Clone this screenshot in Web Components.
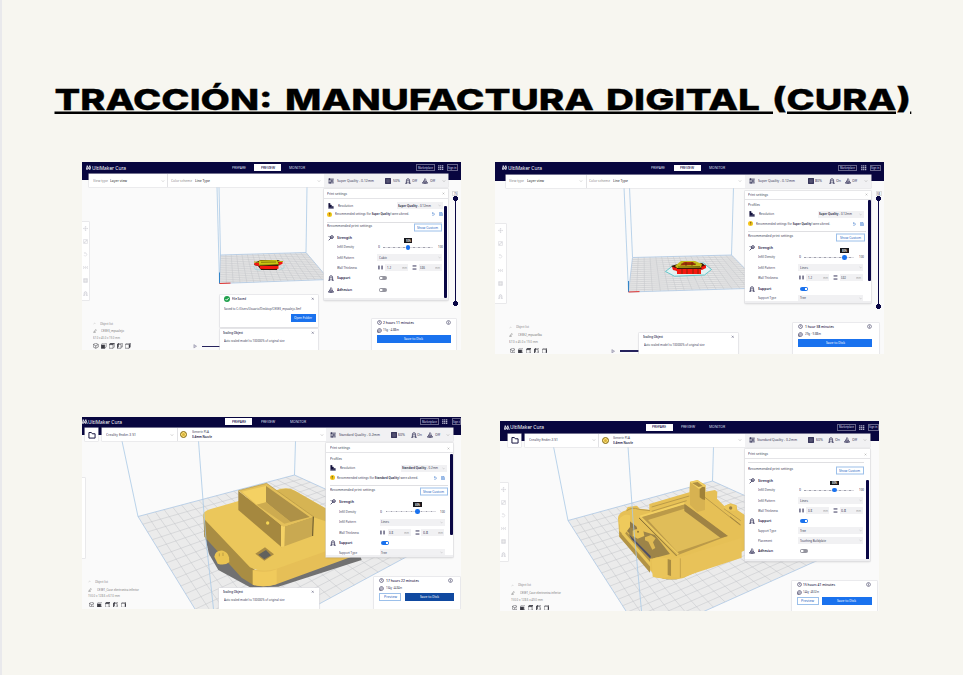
<!DOCTYPE html>
<html lang="es">
<head>
<meta charset="utf-8">
<title>Tracción: Manufactura digital (Cura)</title>
<style>
html,body{margin:0;background:#f7f6f0;width:963px;height:675px;overflow:hidden;font-family:"Noto Sans",sans-serif}
</style>
</head>
<body>
<slide-page>
  <slide-title slot="title"></slide-title>
  <cura-shot data-shot="0"></cura-shot>
  <cura-shot data-shot="1"></cura-shot>
  <cura-shot data-shot="2"></cura-shot>
  <cura-shot data-shot="3"></cura-shot>
</slide-page>
<script>
/* One line of text squeezed or stretched to a given width */
customElements.define('fit-text', class extends HTMLElement {
  connectedCallback() {
    if (this.shadowRoot) return;
    const w = +this.getAttribute('w');
    const r = this.attachShadow({mode: 'open'});
    r.innerHTML = `<style>:host{display:block;flex:none;width:${w}px;height:6px;line-height:6px;font-size:${this.getAttribute('s') || 3.8}px;color:${this.getAttribute('c') || '#3a3a55'};font-weight:${this.getAttribute('b') || 400};white-space:nowrap}
      span{display:inline-block;transform-origin:0 50%}</style><span><slot></slot></span>`;
    const s = r.querySelector('span');
    const n = s.getBoundingClientRect().width;
    if (n) s.style.transform = `scaleX(${w / n})`;
  }
});

/* Small icons on a 12-unit grid */
const ICONS = {
  sliders: '<path d="M0 2h12M0 6h12M0 10h12M3 0v4M8 4v4M4 8v4" stroke-width="1.6"/>',
  infill: '<path d="M0 0h12v12H0z" fill="currentColor"/><path d="M3 3l1.500 1.500M9 3L7.500 4.500M3 9l1.500-1.500M9 9L7.500 7.500M6 1.500v2M6 8.500v2M1.500 6h2M8.500 6h2M5 6h2" stroke="#fff" stroke-width="1.2"/>',
  support: '<path d="M2.500 10V5.500a3.500 4.500 0 0 1 7 0V10M0 11h4V8.500M12 11H8V8.500" stroke-width="1.5"/><path d="M4.700 7a1.500 1.700 0 1 1 2.600 0"/>',
  adhesion: '<path d="M6 0v5M4 3l2 2 2-2M3 5v3h6V5M0 10c3-2 9-2 12 0-3 2-9 2-12 0z" stroke-width="1.4"/>',
  res: '<path d="M1 0h3v4h3v3h4v3H1z" fill="currentColor"/><path d="M0 11.500h12"/>',
  strength: '<circle cx="8" cy="4" r="3" stroke-width="1.7"/><path d="M6 6l-5 5M1 2l3 3M6 3l3 3" stroke-width="1.5"/>',
  clock: '<circle cx="6" cy="6" r="5" stroke-width="1.4"/><path d="M6 3v3l2 1" stroke-width="1.2"/>',
  spool: '<circle cx="6" cy="6" r="5" stroke-width="1.4"/><circle cx="6" cy="6" r="2"/><path d="M1 6v5h4"/>',
  info: '<circle cx="6" cy="6" r="5" stroke-width="1.2"/><path d="M6 5v4M6 2.5v1.3" stroke-width="1.3"/>',
  chev: '<path d="M2 4l4 4 4-4" stroke-width="1.3"/>',
  up: '<path d="M2 8l4-4 4 4" stroke-width="1.2"/>',
  close: '<path d="M2 2l8 8M10 2l-8 8" stroke-width="1.3"/>',
  pencil: '<path d="M2 10l1-3 6-6 2 2-6 6zM1 11.5h8" stroke-width="1.2"/>',
  folder: '<path d="M1 2h4l1.5 2H11v7H1z" stroke-width="1.6"/>',
  undo: '<path d="M3 3h4a3 3 0 0 1 0 7H3M5 1L3 3l2 2" stroke-width="1.5"/>',
  save: '<path d="M1 1h8l2 2v8H1zM3 1v4h5V1M3 11V7h6v4" stroke-width="1.3"/>',
  wallv: '<path d="M2 1v10M10 1v10" stroke-width="2.6"/>',
  wallh: '<path d="M1 2h10M1 10h10" stroke-width="2.2"/>',
  grid: '<path d="M0 1.500h12M0 6h12M0 10.500h12" stroke-width="3" stroke-dasharray="3 1.5"/>',
  play: '<path d="M2 1l8 5-8 5z" stroke-width="1.2" fill="#c9c8d8"/>',
  cube: '<path d="M6 0l6 3v6l-6 3-6-3V3zM0 3l6 3 6-3M6 6v6" stroke-width="1.2"/>',
  cubeF: '<path d="M3 0h9v8L9 12H0V3z"/><path d="M0 4h8.500v8H0z" fill="currentColor"/>',
  cubeT: '<path d="M3 0h9v9l-3 3H0V3zM9 3v9" stroke-width="1.2"/><path d="M3 0h9L9 3.500H0z" fill="currentColor"/>',
  cubeL: '<path d="M3 0h9v9H9M0 3h9v9H0zM3 0v3" stroke-width="1.2"/><path d="M0 3l3-3v8l-3 4z" fill="currentColor"/>',
  cubeR: '<path d="M3 0h9M0 3l3-3M9 3H0v9h9" stroke-width="1.2"/><path d="M9 3.500L12 0v9l-3 3z" fill="currentColor"/>',
  move: '<path d="M6 0v12M0 6h12M4 2l2-2 2 2M4 10l2 2 2-2M2 4L0 6l2 2M10 4l2 2-2 2"/>',
  scale: '<path d="M1 1h10v10H1zM3 9l6-6M6 3h3v3M3 6v3h3"/>',
  rotate: '<path d="M3 2h3a4 4 0 1 1-4 6M5 0L3 2l2 2"/>',
  mirror: '<path d="M0 3l4 3-4 3zM12 3L8 6l4 3zM6 2v8"/>',
  mesh: '<path d="M1 1h10v10H1zM1 4h10M1 8h10M4 1v10M8 1v10"/>',
  mark: '<path d="M0 11L2.500 1l3 7 3-7L12 11M3.500 11V6M8 11V6" stroke-width="1.9"/>'
};
customElements.define('cura-icon', class extends HTMLElement {
  connectedCallback() {
    if (this.shadowRoot) return;
    const s = this.getAttribute('s') || 5;
    this.attachShadow({mode: 'open'}).innerHTML =
      `<style>:host{display:block;flex:none;width:${s}px;height:${s}px;color:${this.getAttribute('c') || '#15133f'}}svg{display:block}</style>
      <svg width="${s}" height="${s}" viewBox="-.5 -.5 13 13" fill="none" stroke="currentColor" stroke-width="1">${ICONS[this.getAttribute('n')]}</svg>`;
  }
});

const T = (w, t, s, c, b) => `<fit-text w="${w}" s="${s || 3.8}" c="${c || '#3a3a55'}" b="${b || 400}">${t}</fit-text>`;
const I = (n, s, c) => `<cura-icon n="${n}" s="${s || 5}" c="${c || '#15133f'}"></cura-icon>`;
/* items: [left, width, html]; each one becomes a flex item with the gap before it */
const flow = (x0, items) => {
  let x = x0;
  return items.map(([l, w, h]) => { const g = l - x; x = l + w; return `<div class="i" style="margin-left:${g}px;width:${w}px">${h}</div>`; }).join('');
};
/* lines: [centre y, items]; each one becomes an 8px row with the gap above it */
const stack = (x0, y0, lines) => {
  let y = y0;
  return lines.map(([c, items]) => { const g = c - 4 - y; y = c + 4; return `<div class="r" style="margin-top:${g}px">${flow(x0, items)}</div>`; }).join('');
};
const ROWCSS = `*{box-sizing:border-box}.r{display:flex;height:8px;align-items:center}.i{flex:none;display:flex;align-items:center}
.box{background:#f1f1f3;height:7px;width:100%;display:flex;align-items:center;justify-content:space-between;padding:0 1.500px}
.btn{display:flex;align-items:center;justify-content:center;width:100%;height:8px;background:#1a72ee}
.ol{background:#fff;border:1px solid #9cc0ea}`;

customElements.define('slide-page', class extends HTMLElement {
  constructor() {
    super();
    this.attachShadow({mode: 'open'}).innerHTML = `<style>
    :host{display:block;box-sizing:border-box;width:963px;height:675px;background:#f7f6f0;border-left:2px solid #e9e9ec;padding-top:76px}
    .g{display:grid;grid-template-columns:413px 400px;grid-template-rows:255px 200px;padding:42px 0 0 80px;align-items:start;justify-items:start}
    </style><slot name="title"></slot><div class="g"><slot></slot></div>`;
  }
});

customElements.define('slide-title', class extends HTMLElement {
  constructor() {
    super();
    this.attachShadow({mode: 'open'}).innerHTML = `<style>:host{display:block;height:44px}svg{display:block}
    text{font:800 29px Inter,sans-serif;fill:#000;stroke:#000;stroke-width:.3}</style>
    <svg width="961" height="44" viewBox="2 76 961 44"><text y="110"><tspan x="54.500" textLength="218" lengthAdjust="spacingAndGlyphs">TRACCIÓN:</tspan> <tspan x="285" textLength="309" lengthAdjust="spacingAndGlyphs">MANUFACTURA</tspan> <tspan x="606" textLength="154" lengthAdjust="spacingAndGlyphs">DIGITAL</tspan> <tspan x="772" textLength="139" lengthAdjust="spacingAndGlyphs">(CURA)</tspan></text>
    <path d="M54.500 112.700H773M787 112.700H896M910 112.700h1.300" stroke="#000" stroke-width="2.500"/></svg>`;
  }
});

/* Build plate, volume edges and model */
const lerp = (a, b, t) => [a[0] + (b[0] - a[0]) * t, a[1] + (b[1] - a[1]) * t];
const P = (pts, f, extra = '') => `<polygon points="${pts}" fill="${f}" ${extra}/>`;
const OBJ = [
`<path d="M254 265l2-3 5-2h17l2 1v3l-2 2-1 4h-16l-3-4z" fill="#3b1708"/>
 <path d="M260 266h18.500v2.700q-9 .6-18.500 0z" fill="#f5180f"/><path d="M254 263l6-.200v3.500l-5-1zM278.500 262l4-.800v2.500l-4 2z" fill="#f5180f"/>
 <path d="M259 260.500l18-.500 2 4.500-20 1z" fill="#c9c912"/><path d="M261 262.300l15-.300M259 265.200l20-.500" stroke="#554400" stroke-width=".6"/>
 <path d="M254 262l5 .300M277.500 261.500h5.500" stroke="#b9a80c" stroke-width="1"/><path d="M253.500 266l2 3.500 5 .500M284 264.500v3.500l-5 2" stroke="#8fd5d8" fill="none" stroke-width=".6"/>`,
`<path d="M665.500 271.500l7-5.500 31-3 8 6.500-7 5.500-30 1.200z" fill="#e3f1f1" stroke="#47bfc4" stroke-width=".8"/>
 <path d="M671 266l7-2 24-1 4 3-5 4-1 4h-22l-2-4.500z" fill="#3d1a08"/><path d="M677 269h24v5h-24z" fill="#f5180f"/><path d="M672 267l5 1v3l-4-1zM701 267l5-2v3l-4 2z" fill="#f5180f"/>
 <path d="M675 266l6-5h14l7 3-1 3.500-24 .500z" fill="#c4bd1c"/><path d="M680 265.500l4-3.500h9l3 3z" fill="#b9320c"/><path d="M678 267l22-.500M681 264h15M686 262v4M692 262v4M682 269v5M687 269v5M693 269v5M698 269v5" stroke="#4c3000" stroke-width=".6"/>`,
`<g transform="translate(75 410) scale(.33333)">
 ${P('388,370 402,432 430,480 525,532 610,530 860,450 850,420 540,500', '#717171')}
 ${P('385,312 388,380 500,503 535,525 540,480', '#a98d43')}
 <path d="M535 480L605 470 830 388v52L600 524q-40 10-65 0z" fill="#e6bf57"/>
 <path d="M533 480q38 12 72-2v44q-38 12-72 2z" fill="#f0ca5c"/>
 <path d="M385 312q2-8 20-14L600 242q35-14 60 0L830 340v56L605 476q-45 14-80-4L388 328q-5-8-3-16z" fill="#ebc75b"/>
 <path d="M603 243q32-14 57 0L830 340v20L716 322z" fill="#d6b453"/>
 ${P('490,242 625,350 620,412 490,300', '#a5883f')}${P('625,350 715,320 713,378 620,412', '#c9a951')}
 ${P('618,346 630,349 628,410 618,411', '#f5d265')}
 ${P('490,242 575,220 715,320 625,350', '#e4c05a')}${P('501,245 573,228 573,277 545,284', '#f4d163')}
 ${P('573,228 704,321 646,336 573,277', '#ae9147')}${P('573,277 648,336 628,341 545,284', '#cdab50')}
 <path d="M490 242L575 220 715 320" fill="none" stroke="#b49646" stroke-width="2"/><path d="M715 320l-2 58" stroke="#453b22" stroke-width="2.500"/>
 <circle cx="578" cy="339" r="5" fill="#f6d655"/>
 ${P('541,431 570,412 597,433 568,452', '#a98b44')}${P('550,434 573,420 588,436 568,448', '#62615d')}
 <path d="M418 440q3-20 26-18 14 4 18 20l1 14q-14 12-35 5z" fill="#eac452"/><path d="M433 430v9M444 428v10" stroke="#a98b3c" fill="none" stroke-width="2"/></g>`,
`<g transform="translate(490 410) scale(.33333)">
 ${P('500,500 530,508 560,508 560,490', '#55534e')}
 <path d="M384 325q2-18 24-24l5-10 28-4 8 9 29 3V282L598 247l2-32 22-5 25 15v20l28-5 7 6-1 20 22 22 18-8 19 6 2 14 30 20v98L580 504q-40 10-80-2L388 380z" fill="#e6c056"/>
 ${P('448,322 583,282 712,378 562,436', '#bb9a49')}${P('474,330 583,296 692,382 562,426', '#e0bd59')}
 ${P('583,281 714,378 692,384 583,303', '#9f8344')}
 ${P('398,350 415,330 440,350 445,372 420,372', '#907948')}
 ${P('388,342 480,440 480,488 388,380', '#b29346')}
 ${P('395,358 482,458 482,472 395,372', '#e9c65a')}
 ${P('420,352 495,375 540,432 485,446 418,374', '#9d8448')}${P('417,373 482,438 482,447 425,388', '#4e5066')}
 <path d="M388 328q12-18 32-12v35l-18 24-14-12z" fill="#eeca5c"/>
 <path d="M428 362q15-10 32 0l3 16-20 8-15-8z" fill="#e8c255"/><circle cx="444" cy="365" r="3" fill="#92793c"/>
 <path d="M465 382l18-7 14 10-8 12 7 17-9 5-12-24-10-4z" fill="#dfba54"/>
 <path d="M447 324L560 438" stroke="#8b7338" stroke-width="3"/><path d="M450 319L565 433" stroke="#edca5e" stroke-width="5"/>
 <path d="M450 320L583 280" stroke="#f3d062" stroke-width="6"/><path d="M410 302q18-12 36-4l34 4M485 304L590 272M485 291L598 258" stroke="#b29346" stroke-width="2.500" fill="none"/>
 <path d="M545 446Q560 445 575 440L755 383v60L570 504l-25-4z" fill="#e8c259"/>
 <path d="M485 448q20-12 50-2v54q-24 8-47 0z" fill="#eac55a"/><path d="M533 447l10 3v48l-10-3z" fill="#a98c43"/>
 <path d="M571 445v58" stroke="#c8a44a" stroke-width="3"/>
 ${P('600,216 645,230 645,300 622,306 600,285', '#d7b251')}${P('600,216 624,211 646,228 626,236', '#f3d164')}
 ${P('606,219 623,216 638,228 626,231', '#ad8d42')}${P('629,238 637,230 645,232 645,270 637,268 629,262', '#a18238')}
 <path d="M645 262L750 345M702 296l50 36" stroke="#b39447" stroke-width="2.500"/><path d="M720 320l32 25" stroke="#a3863f" stroke-width="3"/>
 <path d="M700 291q18-16 38-2l-2 14-26-2z" fill="#edc85a"/><circle cx="722" cy="294" r="5" fill="#987d40"/></g>`
];
customElements.define('cura-scene', class extends HTMLElement {
  connectedCallback() {
    if (this.shadowRoot) return;
    const k = +this.getAttribute('k'), S = SHOTS[k], [a, b, c, d] = S.floor;
    let g = '';
    const n = S.cells;
    for (let i = 1; i < n; i++) {
      const t = i / n;
      g += `M${lerp(a, b, t)}L${lerp(d, c, t)}M${lerp(a, d, t)}L${lerp(b, c, t)}`;
    }
    const small = k < 2;
    this.attachShadow({mode: 'open'}).innerHTML = `<style>:host,svg{display:block}</style>
    <svg width="${S.w}" height="${S.h}" viewBox="${S.x} ${S.y} ${S.w} ${S.h}">
      <polygon points="${[a, b, c, d]}" fill="${small ? '#e6e6e6' : '#ebebeb'}" stroke="#a4c2e2" stroke-width=".7"/>
      <path d="${g}" stroke="#c3c5c9" stroke-width=".5" fill="none"/>
      ${OBJ[k]}
      <path d="${S.edges}" stroke="#a9c9e6" stroke-width=".8" fill="none"/>
      ${small ? `<path d="M${d}l0-11" stroke="#3285c8" stroke-width="1"/><path d="M${d}l11-.4" stroke="#e5342e" stroke-width="1"/>` : ''}
    </svg>`;
  }
});

customElements.define('print-settings', class extends HTMLElement {
  connectedCallback() {
    if (this.shadowRoot) return;
    const S = SHOTS[+this.getAttribute('k')], Q = S.panel, L = Q.l;
    const R = {
      head: () => [[3.5, 20, T(20, 'Print settings', 3.7)], [Q.w - 6, 4, I('close', 3, '#777')]],
      prof: () => [[3.5, 12, T(12, 'Profiles')]],
      reso: () => [[4, 6, I('res', 6)], [14, 15, T(15, 'Resolution', 3.6)], [S.std ? 74.5 : 73, 46, `<div class="box">${T(S.std ? 36 : 33, `<b>${S.q}</b> - ${S.mm}`, 3.6)}${I('chev', 3, '#888')}</div>`]],
      warn: () => [[3.7, 5, `<div class="w">!</div>`], [11.5, S.std ? 81 : 74, T(S.std ? 81 : 74, `Recommended settings (for <b>${S.q}</b>) were altered.`, 3.6)], [107.5, 4, I('undo', 4, '#2469c9')], [115.5, 4, I('save', 4, '#2469c9')]],
      div: () => [[3.5, Q.w - 9, '<div class="d"></div>']],
      rec: () => [[3.5, 45, T(45, 'Recommended print settings')], [Q.btn - L, 28.5, `<div class="btn ol" style="transform:translateY(1.500px)">${T(21, 'Show Custom', 4, '#1c5fc0')}</div>`]],
      str: () => [[4, 6, I('strength', 6)], [13, 15, T(15, 'Strength', 4, '#191744', 600)]],
      den: () => [[13, 17, T(17, 'Infill Density', 3.6)], [54, 2, T(2, '0', 3.4)], [59.5, 50, `<div class="tr"><div class="k" style="left:${Q.pct}%"><div class="tip">${T(5, S.pct, 3, '#fff', 600)}</div></div></div>`], [114, 5, T(5, '100', 3.4)]],
      pat: () => [[13, 17, T(17, 'Infill Pattern', 3.6)], [53.8, 65, `<div class="box">${T(8, S.pat, 3.4)}${I('chev', 3, '#888')}</div>`]],
      wall: () => [[13, 20, T(20, 'Wall Thickness', 3.6)], [54, 5, I('wallv', 5)], [61.5, 23, `<div class="box">${T(4, S.wa, 3.3)}${T(5, 'mm', 3, '#999')}</div>`], [88.5, 5, I('wallh', 5)], [95, 23, `<div class="box">${T(5, S.wb, 3.3)}${T(5, 'mm', 3, '#999')}</div>`]],
      sup: () => [[4, 6, I('support', 6)], [13, 13.5, T(13.5, 'Support', 4, '#191744', 600)], [55, 9, `<div class="tg ${S.on ? 'on' : ''}"></div>`]],
      typ: () => [[13, 18, T(18, 'Support Type', 3.6)], [53.8, 65, `<div class="box">${T(6, 'Tree', 3.4)}${I('chev', 3, '#888')}</div>`]],
      pla: () => [[13, 14, T(14, 'Placement', 3.6)], [53.8, 65, `<div class="box">${T(26, 'Touching Buildplate', 3.4)}${I('chev', 3, '#888')}</div>`]],
      adh: () => [[4, 6, I('adhesion', 6)], [13, 15, T(15, 'Adhesion', 4, '#191744', 600)], [55, 9, '<div class="tg"></div>']]
    };
    const rows = Q.rows.map(([n, y]) => [y, R[n]()]);
    this.attachShadow({mode: 'open'}).innerHTML = `<style>${ROWCSS}
    :host{display:block;height:100%;background:#fff;box-shadow:0 0 0 .6px #dcdce0,0 .5px 2px #0002;overflow:hidden;position:relative}
    .hl{height:1px;background:#e4e4e7;margin-bottom:-1px}
    .w{width:5px;height:5px;border-radius:50%;background:#f5c51b;color:#111;font:700 4px/5px "Noto Sans",sans-serif;text-align:center}
    .d{height:1px;width:100%;background:#dfdfe2}
    .tr{width:100%;height:1px;background:repeating-linear-gradient(90deg,#a2a2ae 0 1.500px,#dcdce2 1.500px 5px);position:relative}
    .k{position:absolute;top:-1.700px;width:4.400px;height:4.400px;margin-left:-2.200px;border-radius:50%;background:#1a72ee}
    .tip{position:absolute;left:-2px;top:-7px;width:8.500px;height:4.500px;background:#17171c;display:flex;align-items:center;justify-content:center}
    .tg{width:8px;height:4px;border-radius:2px;background:radial-gradient(circle at 5.700px 50%,#ededf0 0 1.700px,#8b8b95 2px)}
    .on{background:radial-gradient(circle at 6px 50%,#fff 0 1px,#1a72ee 1.500px)}
    .tg:not(.on){background:radial-gradient(circle at 2.200px 50%,#fff 0 1.200px,#0000 1.500px),#95959f}
    .sb{position:absolute;right:.5px;width:2.700px;border-radius:1px;background:#0a0745;top:${Q.sb[0] - Q.t}px;height:${Q.sb[1] - Q.sb[0]}px}
    .grip{position:absolute;bottom:0;left:0;right:0;height:2px;background:#efeff1}
    </style>${stack(0, Q.t, rows.slice(0, 1))}<div class="hl"></div>${stack(0, rows[0][0] + 4, rows.slice(1))}<div class="sb"></div><div class="grip"></div>`;
  }
});

customElements.define('job-card', class extends HTMLElement {
  connectedCallback() {
    if (this.shadowRoot) return;
    const J = SHOTS[+this.getAttribute('k')].job;
    this.attachShadow({mode: 'open'}).innerHTML = `<style>${ROWCSS}:host{display:block;height:100%;background:#fff;box-shadow:0 0 0 .6px #e0e0e4,0 .5px 2px #0001}</style>` +
    stack(0, 0, [
      [7.3, [[5, 5, I('clock', 5)], [11.5, J.tw, T(J.tw, J.time, 4.2, '#191744', 500)], [74, 5, I('info', 5)]]],
      [14.7, [[5, 5, I('spool', 5)], [11.5, 16, T(16, J.mat, 3.6)]]],
      [23.5, J.two ? [[5, 22, `<div class="btn ol">${T(13, 'Preview', 3.8, '#1c5fc0')}</div>`], [30.5, 49.5, `<div class="btn" style="background:${J.c}">${T(19, 'Save to Disk', 3.8, '#fff')}</div>`]]
        : [[5, 74, `<div class="btn">${T(19, 'Save to Disk', 3.8, '#fff')}</div>`]]]
    ]);
  }
});

customElements.define('cura-toast', class extends HTMLElement {
  connectedCallback() {
    if (this.shadowRoot) return;
    const saved = this.hasAttribute('saved');
    this.attachShadow({mode: 'open'}).innerHTML = `<style>${ROWCSS}:host{display:block;height:100%;background:#fff;box-shadow:0 0 0 .6px #e0e0e4,0 .5px 2px #0002}
    .ok{width:6px;height:6px;border-radius:50%;background:#1fa04c}svg{display:block}</style>` +
    stack(0, 0, saved ? [
      [6.5, [[4, 6, '<div class="ok"><svg width="6" height="6" viewBox="0 0 6 6"><path d="M1.500 3l1.200 1.200L4.700 2" fill="none" stroke="#fff" stroke-width=".9"/></svg></div>'], [12.5, 14, T(14, 'File Saved', 3.8, '#191744', 500)], [91, 3.5, I('close', 3.5)]]],
      [16, [[4.5, 77, T(77, 'Saved to C:/Users/Usuario/Desktop/CE3E3_mpualejo.3mf', 3.6)]]],
      [25.3, [[71, 25, `<div class="btn">${T(18, 'Open Folder', 3.8, '#fff')}</div>`]]]
    ] : [
      [5, [[3.5, 20, T(20, 'Scaling Object', 3.6, '#191744', 500)], [91.5, 3.5, I('close', 3.5)]]],
      [12.5, [[4.5, 60.5, T(60.5, 'Auto scaled model to 100000% of original size', 3.5)]]]
    ]);
  }
});

const SHOTS = [
 {x: 82, y: 162, w: 379, h: 188, hb: 180, bt: 174, bb: 187, logo: 85.5, ly: 167.5, tabs: [232, 254, 289], act: 1, mk: 416, gr: 438, si: 447,
  bl: 89, left: 324, vt: [92.5, 110, 160.5, 167, 171, 195, 317], set: [328, 336.5, 37, 385, 393, 405, 412, 422, 430, 441.5], v: ['50%', 'Off', 'Off'],
  q: 'Super Quality', mm: '0.12mm', pct: '50%', pat: 'Cubic', wa: '1.2', wb: '0.86', on: 0, right: 447.5,
  tool: [7, 222, 300], floor: [[220.5, 255], [306, 252.5], [329, 279.5], [219.5, 283.5]], cells: 16, edges: 'M217 187L219.500 283M219 187L220.500 255M307 187L306 252.500',
  panel: {l: 323.5, t: 188.5, w: 124, b: 300, btn: 413.5, pct: 50, sb: [206, 298], rows: [['head', 193.5], ['reso', 205.8], ['warn', 214.3], ['div', 222.5], ['rec', 226.3], ['str', 238], ['den', 247.5], ['pat', 258], ['wall', 268], ['sup', 278.5], ['adh', 290]]},
  job: {x: 371.5, y: 315.5, w: 84, h: 32, time: '2 hours 11 minutes', tw: 31, mat: '15g · 4.88m'}, slider: [455, 191, 198, 304],
  obj: [92.5, 323.5, 331, 338, 346, 'CE3E3_mpualejo', 23, '67.0 x 45.0 x 19.0 mm', 27], play: [193, 201.5, 18.5], toasts: [[219.5, 292.5, 98, 31.5, 'saved'], [219.5, 328, 98, 21.5, '']]},
 {x: 495, y: 162, w: 389, h: 192, hb: 181, bt: 174.5, bb: 187.5, logo: 501.5, ly: 168, tabs: [651, 673.5, 709], act: 1, mk: 838, gr: 861, si: 870,
  bl: 505.5, left: 744.5, vt: [509, 527, 579, 585.5, 588.5, 613, 738], set: [748.5, 757.5, 37, 808, 815, 828.5, 835.5, 845, 852, 864], v: ['80%', 'On', 'Off'],
  q: 'Super Quality', mm: '0.12mm', pct: '80%', pat: 'Lines', wa: '1.2', wb: '0.82', on: 1, right: 871,
  tool: [10.5, 224, 303], floor: [[632.5, 257.5], [731.5, 255], [764, 288], [628.5, 292]], cells: 17, edges: 'M624 187L628.500 292M629.500 187L632.500 257M733.500 187L731.500 255',
  panel: {l: 744.5, t: 190.5, w: 126.5, b: 303, btn: 836, pct: 81, sb: [200, 281], rows: [['head', 194.7], ['prof', 205.5], ['reso', 214.5], ['warn', 223.8], ['div', 231.8], ['rec', 235.8], ['str', 248], ['den', 257.5], ['pat', 267.7], ['wall', 278], ['sup', 288.7], ['typ', 298.5]]},
  job: {x: 793, y: 319.5, w: 85.5, h: 32.5, time: '1 hour 38 minutes', tw: 29, mat: '29g · 9.88m'}, slider: [878.5, 191, 200, 307],
  obj: [509, 327, 335, 341.5, 350.5, 'CE3E2_mpuaelba', 24, '67.0 x 45.0 x 19.0 mm', 29], play: [611, 620, 19], toasts: [[639, 332, 99, 21.5, '']]},
 {x: 82, y: 417, w: 379, h: 192, hb: 435, bt: 428, bb: 441, logo: 82, ly: 421.5, tabs: [225, 260.5, 289.5], act: 0, mk: 420, gr: 442, si: 452,
  fold: [85, 102], left: 326, vt: [106, 30, 170, 176.5, 179.5, 191.5, 319.5], set: [330, 338.5, 41, 391, 398, 410.5, 417, 427, 435, 446], v: ['60%', 'On', 'Off'],
  q: 'Standard Quality', mm: '0.2mm', std: 1, pct: '60%', pat: 'Lines', wa: '0.8', wb: '0.8', on: 1, right: 453,
  tool: [2.5, 478, 558], floor: [[138, 516.5], [294.5, 475], [437.7, 540], [223.6, 655.5]], cells: 18, edges: 'M122 441L138 516.500M198.500 441L206 540L213.500 609M295.500 441L294.500 475',
  panel: {l: 326, t: 443, w: 127, b: 557, btn: 419.5, pct: 64, sb: [454, 535], rows: [['head', 448], ['prof', 459], ['reso', 468], ['warn', 477.5], ['div', 485.5], ['rec', 489.5], ['str', 501.5], ['den', 511.5], ['pat', 522], ['wall', 532.5], ['sup', 543], ['typ', 552.8]]},
  job: {x: 374, y: 573.5, w: 85.5, h: 32.5, time: '17 hours 22 minutes', tw: 33, mat: '134g · 44.84m', two: 1, c: '#1049a0'},
  obj: [88, 581.5, 589.5, 596, 604.5, 'CE3E1_Case electronica inferior', 42, '150.0 x 128.6 x 67.0 mm', 32], toasts: [[219, 587, 100, 22, '']]},
 {x: 500, y: 421, w: 379, h: 190, hb: 440.5, bt: 434, bb: 446.5, logo: 504, ly: 427.3, tabs: [645.5, 680.5, 709], act: 0, mk: 837, gr: 859, si: 868,
  fold: [508, 524.5], left: 744.5, vt: [529, 29, 591.5, 597.5, 601.5, 612.5, 737.5], set: [748.5, 757, 40, 808.5, 816, 827.5, 835, 844, 852, 862.5], v: ['60%', 'On', 'Off'],
  q: 'Standard Quality', mm: '0.2mm', std: 1, pct: '60%', pat: 'Lines', wa: '0.8', wb: '0.8', on: 1, right: 869.5,
  tool: [7.5, 483, 561], floor: [[568, 520.5], [712.5, 481], [853, 544.5], [643.6, 638.5]], cells: 18, edges: 'M553.500 446.500L568 520.500M628 446.500L633 520L641.500 611M713.500 446.500L712.500 481',
  panel: {l: 744.5, t: 449, w: 125, b: 561, btn: 835.5, pct: 61, sb: [480, 560], rows: [['head', 454], ['div', 462.3], ['rec', 468.5], ['str', 480.5], ['den', 490], ['pat', 500.5], ['wall', 510.7], ['sup', 521], ['typ', 530.8], ['pla', 541], ['adh', 551.3]]},
  job: {x: 791.5, y: 577.5, w: 85, h: 32, time: '15 hours 41 minutes', tw: 32, mat: '144g · 48.02m', two: 1, c: '#1a72ee'},
  obj: [511, 585, 592.5, 599.5, 607.5, 'CE3E1_Case electronica inferior', 41, '150.0 x 128.6 x 49.0 mm', 32], toasts: []}
];
const OFFSET = [[0, 0], [0, 0], [0, 0], [5, 4]];

customElements.define('cura-shot', class extends HTMLElement {
  connectedCallback() {
    if (this.shadowRoot) return;
    const k = +this.dataset.shot, S = SHOTS[k], X = S.x, Y = S.y;
    const over = (x, y, w, h, html, cls = '') => `<div class="o ${cls}" style="left:${x - X}px;top:${y - Y}px;width:${w}px;height:${h}px">${html}</div>`;
    const [ta, tb, tc] = S.tabs;
    const on = t => `<div class="tab">${T(14, t, 3.6, '#08063f', 500)}</div>`;
    const off = (w, t) => T(w, t, 3.6, '#dcdcea');
    const tabs = S.act ? [[ta, 14, off(14, 'PREPARE')], [tb, 27, on('PREVIEW')], [tc, 16, off(16, 'MONITOR')]]
                       : [[ta, 27, on('PREPARE')], [tb, 14, off(14, 'PREVIEW')], [tc, 16, off(16, 'MONITOR')]];
    const head = flow(X, [[S.logo, 5.5, I('mark', 5.5, '#fff')], [S.logo + 6, 34, T(34, 'UltiMaker Cura', 5, '#fff', 400)], ...tabs,
      [S.mk, 18.5, `<div class="hb">${T(15, 'Marketplace', 3, '#dcdcea')}</div>`], [S.gr, 5.5, I('grid', 5.5, '#b9b8cf')], [S.si, Math.min(11, X + S.w - S.si), `<div class="hb">${T(Math.min(8.5, X + S.w - S.si - 1), 'Sign in', 3, '#dcdcea')}</div>`]]);
    const v = S.vt, s = S.set;
    const start = S.fold ? S.fold[1] : S.bl;
    const items = S.fold
      ? [[v[0], v[1], T(v[1], 'Creality Ender-3 S1', 3.7)], [v[2], 4, I('chev', 4, '#888')], [v[3], 1, '<div class="dv"></div>'], [v[4], 7, '<div class="mat"></div>'],
         [v[5], 20, `<div>${T(17, 'Generic PLA', 3.3)}${T(20, '0.4mm Nozzle', 3.3, '#191744', 600)}</div>`], [v[6], 4, I('chev', 4, '#888')]]
      : [[v[0], 15, T(15, 'View type', 3.6, '#888')], [v[1], 17, T(17, 'Layer view', 3.7, '#222')], [v[2], 4, I('chev', 4, '#999')], [v[3], 1, '<div class="dv"></div>'],
         [v[4], 21, T(21, 'Color scheme', 3.6, '#888')], [v[5], 15, T(15, 'Line Type', 3.7, '#222')], [v[6], 4, I('chev', 4, '#999')]];
    const setItems = [[s[0], 6, I('sliders', 6)], [s[1], s[2], T(s[2], `${S.q} - ${S.mm}`, 3.9)], [s[3] - .5, 6, I('infill', 6)], [s[4], 7, T(7, S.v[0], 3.8)],
      [s[5], 6, I('support', 6)], [s[6], 5, T(5, S.v[1], 3.8)], [s[7], 6, I('adhesion', 6)], [s[8], 5, T(5, S.v[2], 3.8)], [s[9], 4, I('chev', 4, '#888')]];
    const bar = over(start, S.bt, S.right - start, S.bb - S.bt, `<div class="bl" style="width:${S.left - start}px">${flow(start, items)}</div><div class="bs">${flow(S.left, setItems)}</div>`, 'bar');
    const [ox, y1, y2, y3, y4, nm, nw, dm, dw] = S.obj;
    const list = over(ox, y1 - 4, 60, y4 - y1 + 8, stack(0, y1 - 4, [
      [y1, [[0, 3, I('up', 3, '#888')], [7, 13, T(13, 'Object list', 3.4, '#888')]]],
      [y2, [[0, 5, I('pencil', 4, '#555')], [8.5, nw, T(nw, nm, 3.4, '#777')]]],
      [y3, [[0, dw, T(dw, dm, 3.2, '#888')]]],
      [y4, ['cube', 'cubeF', 'cubeT', 'cubeL', 'cubeR'].map((n, i) => [.5 + i * 8.1, 5.5, I(n, 5.5, '#3c3c44')])]
    ]));
    const tw = S.tool[0];
    const tools = over(X, S.tool[1], tw, S.tool[2] - S.tool[1], tw > 5 ? ['move', 'scale', 'rotate', 'mirror', 'mesh', 'support'].map(n => I(n, 5, '#c0c0c8')).join('') : '', 'tools');
    const P0 = S.panel, J = S.job;
    const slider = S.slider ? over(S.slider[0] - 3, S.slider[1], 6, S.slider[3] - S.slider[1] + 2, `<div class="num">${T(3, k ? '58' : '75', 3)}</div><div class="sl"></div>`, 'slider') : '';
    const play = S.play ? over(S.play[0], y4 - 2, 30, 5, `<div style="display:flex;align-items:center">${flow(S.play[0], [[S.play[0], 4.5, I('play', 4.5, '#77758f')], [S.play[1], S.play[2], '<div class="pb"></div>']])}</div>`) : '';
    this.attachShadow({mode: 'open'}).innerHTML = `<style>${ROWCSS}
    :host{display:block;position:relative;overflow:hidden;background:#fafafa;width:${S.w}px;height:${S.h}px;margin:${OFFSET[k][1]}px 0 0 ${OFFSET[k][0]}px}
    .head{position:relative;height:${S.hb - Y}px;background:#08063f;padding-top:${S.ly - Y - 4}px}
    .hr{display:flex;align-items:center;height:8px}
    .o{position:absolute}.scene{position:absolute;left:0;top:0}
    .tab{background:#fff;width:100%;height:6.500px;display:flex;align-items:center;justify-content:center}
    .hb{border:1px solid #66648a;width:100%;height:6.500px;display:flex;align-items:center;justify-content:center;overflow:hidden}
    .bar{display:flex;box-shadow:0 0 0 .5px #dcdce0}.bl,.bs{display:flex;align-items:center;height:100%;flex:none}.bl{background:#fff}.bs{background:#f1f1f3;flex:1}
    .bl .i>div>fit-text{margin:-1px 0}
    .dv{width:1px;height:13px;background:#e2e2e5}.mat{width:7px;height:7px;border-radius:50%;background:#d9b13a;border:1px solid #8a7220;box-shadow:inset 0 0 0 1px #ffe680}
    .fold{background:#fff;display:flex;align-items:center;justify-content:center;box-shadow:0 0 0 .5px #dcdce0}
    .tools{background:#fff;display:flex;flex-direction:column;align-items:center;justify-content:space-around;box-shadow:0 0 0 .6px #dedee2}
    .slider{display:flex;flex-direction:column;align-items:center}.num{width:6px;height:5px;background:#fff;border:.5px solid #ddd;display:flex;align-items:center;justify-content:center;flex:none}
    .sl{flex:1;width:5px;background:radial-gradient(circle 2.500px at 50% 2.500px,#0a0745 92%,#0000),radial-gradient(circle 2.500px at 50% calc(100% - 2.500px),#0a0745 92%,#0000),linear-gradient(90deg,#0000 1.600px,#0a0745 1.600px 3.400px,#0000 3.400px)}
    .pb{width:100%;height:1.500px;background:#25225c}
    </style>
    <cura-scene class="scene" k="${k}"></cura-scene>
    <div class="head"><div class="hr">${head}</div></div>
    ${S.fold ? over(S.fold[0], S.bt, 13, S.bb - S.bt, I('folder', 8), 'fold') : ''}${bar}${tools}${list}${play}
    ${over(P0.l, P0.t, P0.w, P0.b - P0.t, `<print-settings k="${k}"></print-settings>`)}
    ${slider}${over(J.x, J.y, J.w, J.h, `<job-card k="${k}"></job-card>`)}
    ${S.toasts.map(t => over(t[0], t[1], t[2], t[3], `<cura-toast ${t[4]}></cura-toast>`)).join('')}`;
  }
});
</script>
</body>
</html>
